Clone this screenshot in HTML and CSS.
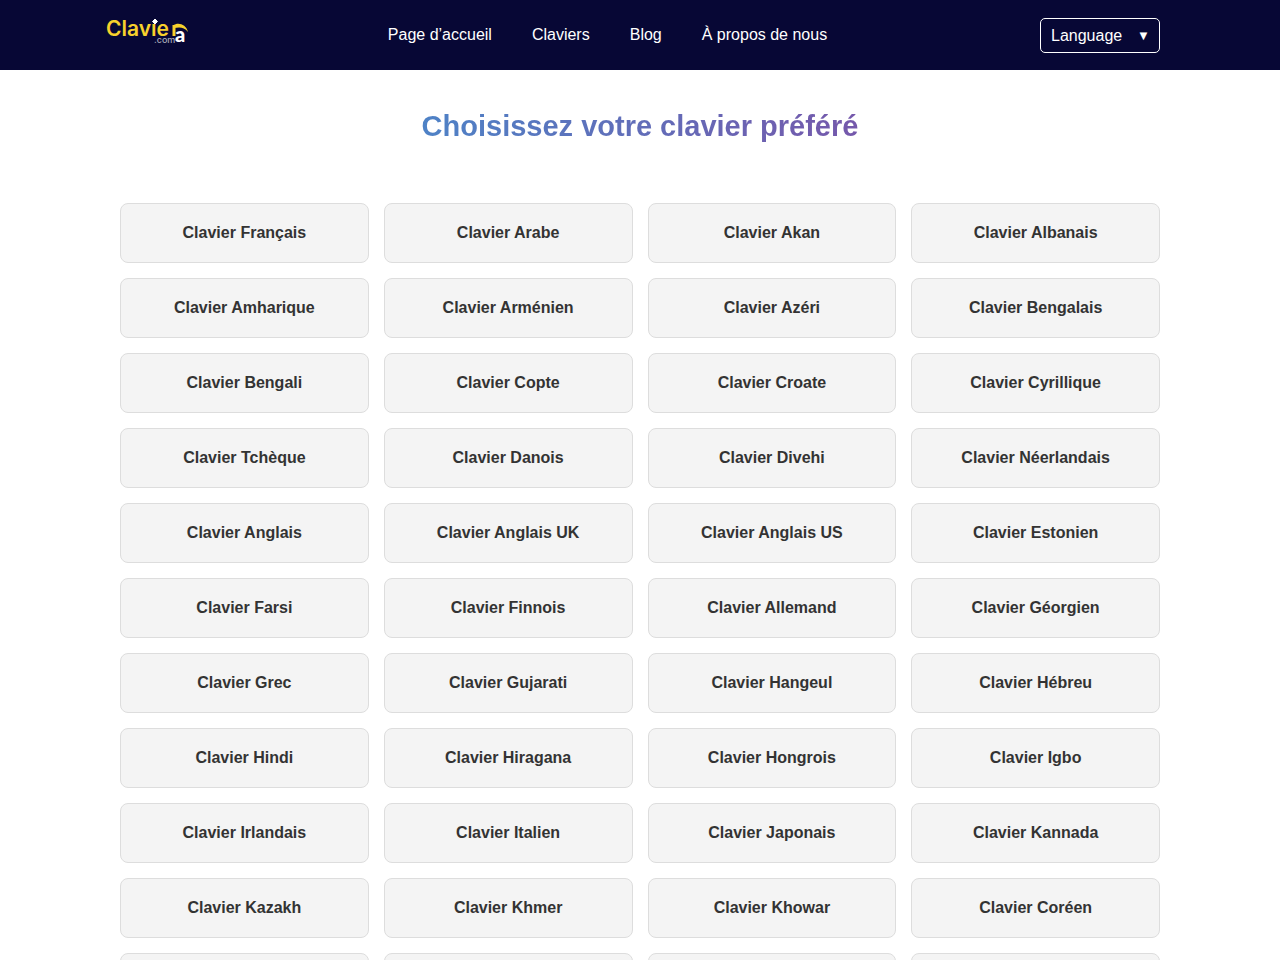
FILE: index.html
```html
<!DOCTYPE html>
<html lang="fr">
<head>
<meta charset="utf-8">
<meta name="viewport" content="width=device-width, initial-scale=1">
<title>Claviera – Choisissez votre clavier préféré</title>
<link rel="stylesheet" href="styles.css">
</head>
<body>
<header class="header">
  <div class="header-inner">
    <a class="logo" href="#" aria-label="Claviera.com">
      <svg class="logo-art" viewBox="0 0 84 30" width="84" height="30">
        <text class="logo-name" x="-1" y="20">Clavıe</text>
        <path d="M67 20V9" fill="none" stroke="#f8d12c" stroke-width="3"/>
        <path d="M66 9.500C71 6 79 8 81 16C77 11 73 11 67 12z" fill="#f8d12c"/>
        <path d="M48 3l2.500 2.500-2.500 2.500-2.500-2.500z" fill="#fff" stroke="#fff"/>
        <text class="logo-a" x="68" y="26">a</text>
        <text class="logo-com" x="47" y="27">.com</text>
      </svg>
    </a>
    <nav class="nav">
      <a href="#">Page d’accueil</a>
      <a href="#">Claviers</a>
      <a href="#">Blog</a>
      <a href="#">À propos de nous</a>
    </nav>
    <div class="language">
      <select class="language-select" aria-label="Language">
        <option>Language</option>
      </select>
      <span class="language-arrow" aria-hidden="true">▼</span>
    </div>
  </div>
</header>
<main class="main">
  <h1 class="title"><span class="title-text">Choisissez votre clavier préféré</span></h1>
  <div class="grid">
    <a class="card" href="#">Clavier Français</a>
    <a class="card" href="#">Clavier Arabe</a>
    <a class="card" href="#">Clavier Akan</a>
    <a class="card" href="#">Clavier Albanais</a>
    <a class="card" href="#">Clavier Amharique</a>
    <a class="card" href="#">Clavier Arménien</a>
    <a class="card" href="#">Clavier Azéri</a>
    <a class="card" href="#">Clavier Bengalais</a>
    <a class="card" href="#">Clavier Bengali</a>
    <a class="card" href="#">Clavier Copte</a>
    <a class="card" href="#">Clavier Croate</a>
    <a class="card" href="#">Clavier Cyrillique</a>
    <a class="card" href="#">Clavier Tchèque</a>
    <a class="card" href="#">Clavier Danois</a>
    <a class="card" href="#">Clavier Divehi</a>
    <a class="card" href="#">Clavier Néerlandais</a>
    <a class="card" href="#">Clavier Anglais</a>
    <a class="card" href="#">Clavier Anglais UK</a>
    <a class="card" href="#">Clavier Anglais US</a>
    <a class="card" href="#">Clavier Estonien</a>
    <a class="card" href="#">Clavier Farsi</a>
    <a class="card" href="#">Clavier Finnois</a>
    <a class="card" href="#">Clavier Allemand</a>
    <a class="card" href="#">Clavier Géorgien</a>
    <a class="card" href="#">Clavier Grec</a>
    <a class="card" href="#">Clavier Gujarati</a>
    <a class="card" href="#">Clavier Hangeul</a>
    <a class="card" href="#">Clavier Hébreu</a>
    <a class="card" href="#">Clavier Hindi</a>
    <a class="card" href="#">Clavier Hiragana</a>
    <a class="card" href="#">Clavier Hongrois</a>
    <a class="card" href="#">Clavier Igbo</a>
    <a class="card" href="#">Clavier Irlandais</a>
    <a class="card" href="#">Clavier Italien</a>
    <a class="card" href="#">Clavier Japonais</a>
    <a class="card" href="#">Clavier Kannada</a>
    <a class="card" href="#">Clavier Kazakh</a>
    <a class="card" href="#">Clavier Khmer</a>
    <a class="card" href="#">Clavier Khowar</a>
    <a class="card" href="#">Clavier Coréen</a>
    <a class="card" href="#">Clavier Kurde</a>
    <a class="card" href="#">Clavier Lao</a>
    <a class="card" href="#">Clavier Letton</a>
    <a class="card" href="#">Clavier Lituanien</a>
  </div>
</main>
</body>
</html>
```

FILE: styles.css
```css
* {
  box-sizing: border-box;
}

body {
  margin: 0;
  background: #fff;
  color: #333;
  font-family: "Liberation Sans", Arial, sans-serif;
  font-size: 16px;
  line-height: 18px;
}

.header {
  padding: 0 20px;
  background: #070735;
}

.header-inner {
  display: flex;
  align-items: center;
  justify-content: space-between;
  max-width: 1040px;
  min-height: 70px;
  margin: 0 auto;
}

.logo {
  margin: 0 -16px 8px -13px;
}

.logo-art {
  display: block;
  overflow: visible;
}

.logo-name {
  fill: #f8d12c;
  font: 600 21px Inter, sans-serif;
}

.logo-a {
  fill: #fff;
  font: 900 20px Lato, sans-serif;
}

.logo-com {
  fill: #a9a9b8;
  font: 500 9px Inter, sans-serif;
}

.nav {
  display: flex;
  flex-wrap: wrap;
  gap: 10px 40px;
}

.nav a {
  color: #fff;
  text-decoration: none;
}

.language {
  position: relative;
}

.language-select {
  display: block;
  appearance: none;
  width: 120px;
  height: 35px;
  padding: 2px 10px 0;
  border: 1px solid #fff;
  border-radius: 5px;
  background: transparent;
  color: #fff;
  font: inherit;
}

.language-arrow {
  position: absolute;
  top: 9px;
  right: 10px;
  color: #fff;
  font-size: 13px;
  pointer-events: none;
}

.main {
  max-width: 1080px;
  margin: 0 auto;
  padding: 40px 20px;
}

.title {
  margin: 0 0 60px;
  font-size: 29px;
  line-height: 33px;
  text-align: center;
}

.title-text {
  background: linear-gradient(90deg, #4e82c6, #7558ab);
  background-clip: text;
  -webkit-background-clip: text;
  color: transparent;
}

.grid {
  display: grid;
  grid-template-columns: repeat(4, 1fr);
  gap: 15px;
}

.card {
  padding: 20px;
  border: 1px solid #ddd;
  border-radius: 8px;
  background: #f4f4f4;
  color: #333;
  font-weight: 700;
  text-align: center;
  text-decoration: none;
}

@media (max-width: 800px) {
  .grid {
    grid-template-columns: repeat(2, 1fr);
  }
}
```
